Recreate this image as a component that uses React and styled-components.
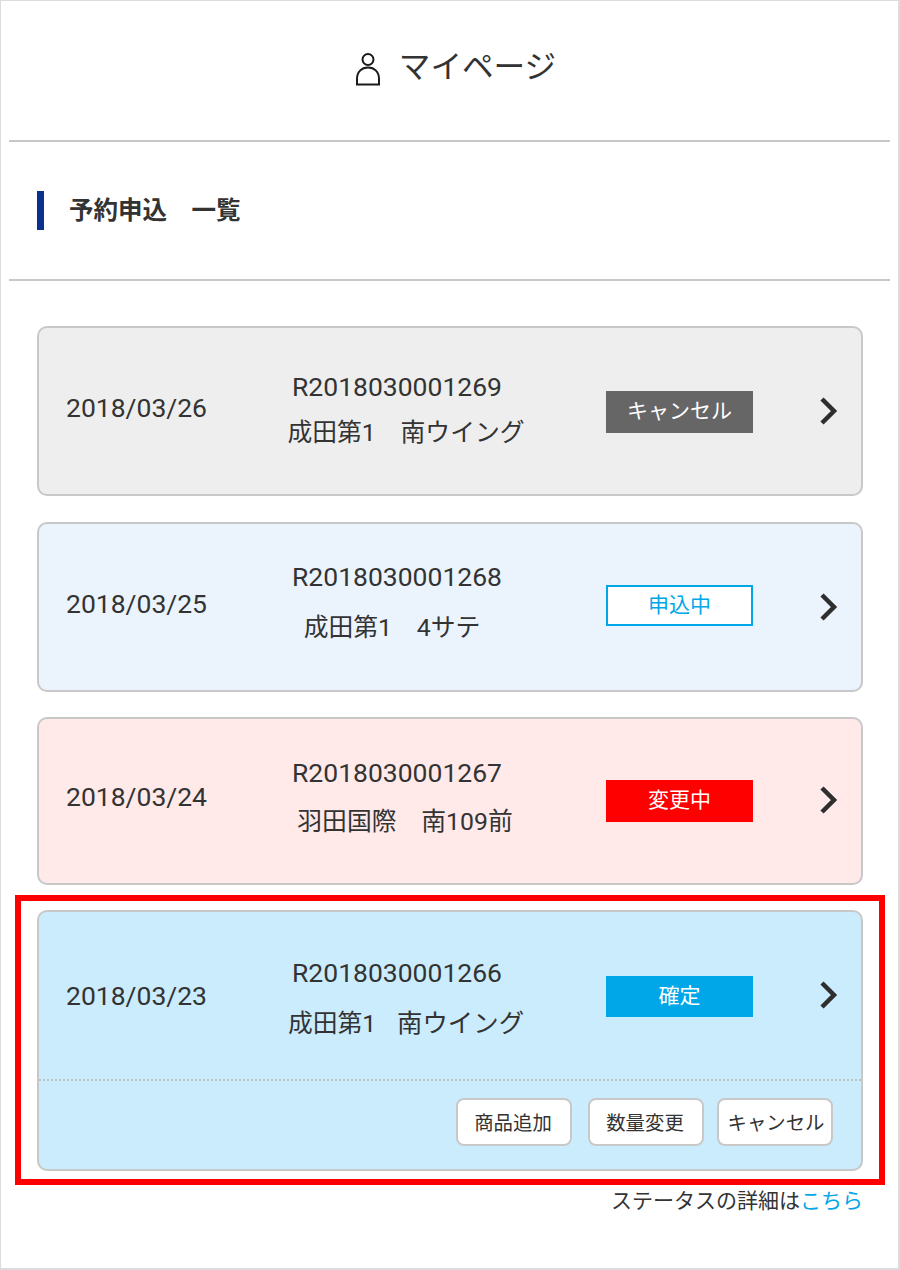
import React from "react";
import styled, { createGlobalStyle } from "styled-components";

const Global = createGlobalStyle`
  html, body { margin: 0; padding: 0; background: #fff; }
  body { font-family: Roboto, "Noto Sans CJK JP", sans-serif; color: #333; }
  * { box-sizing: border-box; }
`;

const Page = styled.div`
  width: 900px;
  height: 1270px;
  border: 1px solid #dcdcdc;
  border-width: 1px 2px 2px 1px;
  background: #fff;
  overflow: hidden;
`;

const Header = styled.header`
  height: 141px;
  margin: 0 8px;
  border-bottom: 2px solid #c8c8c8;
  display: flex;
  align-items: flex-start;
  justify-content: center;
  gap: 18px;
  padding: 45px 0 0 12px;
`;

const Title = styled.h1`
  margin: 1px 0 0;
  font-weight: 400;
  font-size: 31.6px;
  line-height: 42px;
  color: #333;
`;

const Section = styled.div`
  height: 139px;
  margin: 0 8px;
  border-bottom: 2px solid #c8c8c8;
  display: flex;
  align-items: center;
  padding: 0 0 0 28px;
`;

const SectionTitle = styled.h2`
  margin: 0;
  height: 39px;
  border-left: 7px solid #0a3190;
  padding-left: 25px;
  font-size: 24.5px;
  line-height: 40px;
  font-weight: 700;
  color: #333;
  white-space: pre;
`;

const List = styled.main`
  padding: 45px 35px 0 36px;
  display: flex;
  flex-direction: column;
`;

const Card = styled.section`
  height: ${(p) => p.$h}px;
  margin-bottom: ${(p) => p.$mb}px;
  border: 2px solid #c8c8c8;
  border-radius: 10px;
  background: ${(p) => p.$bg};
`;

const Row = styled.div`
  height: 167px;
  display: grid;
  grid-template-columns: 188px 340px 1fr;
`;

const DateCell = styled.div`
  padding: ${(p) => p.$top}px 0 0 27px;
  font-size: 26.5px;
  line-height: 30px;
  color: #333;
`;

const Center = styled.div`
  padding-top: ${(p) => p.$top}px;
  display: flex;
  flex-direction: column;
  align-items: center;
  font-size: 26.5px;
  line-height: 30px;
  color: #333;
`;

const Place = styled.div`
  margin-top: ${(p) => p.$gap}px;
  font-size: 24.8px;
  white-space: pre;
  transform: translateX(${(p) => p.$dx}px);
`;

const WideWord = styled.span`
  font-size: 25.4px;
  margin-left: -4px;
`;

const Right = styled.div`
  padding-top: ${(p) => p.$top}px;
  display: flex;
  align-items: flex-start;
`;

const Badge = styled.div`
  width: 147px;
  height: ${(p) => p.$h}px;
  margin-left: 39px;
  padding-bottom: 6px;
  display: flex;
  align-items: center;
  justify-content: center;
  font-size: 21px;
  color: ${(p) => p.$fg};
  background: ${(p) => p.$bg};
  border: ${(p) => (p.$outline ? `2px solid ${p.$fg}` : "none")};
`;

const Chevron = styled.svg`
  width: 20px;
  height: 28px;
  margin: ${(p) => p.$top}px 0 0 66px;
  flex: none;
`;

const Actions = styled.div`
  border-top: 2px dotted #c0c0c0;
  height: 90px;
  display: flex;
  justify-content: flex-end;
  gap: 13px;
  padding: 17px 28px 0 0;
`;

const ActionButton = styled.button`
  width: 116px;
  height: 48px;
  padding: 0 2px 2px 0;
  border: 2px solid #c8c8c8;
  border-radius: 8px;
  background: #fff;
  font-family: inherit;
  font-size: 19.4px;
  color: #333;
  &:first-child { margin-right: 3px; }
  &:last-child { padding: 0 0 2px 2px; }
`;

const Highlight = styled.div`
  margin: 0 -22px 0 -22px;
  padding: 9px 16px 8px 16px;
  border: 6px solid #ff0000;
  height: 290px;
`;

const Note = styled.p`
  margin: 1px 0 0 0;
  text-align: right;
  font-size: 21px;
  line-height: 30px;
  color: #333;
`;

const NoteLink = styled.a`
  color: #00a7e8;
  text-decoration: none;
`;

const UserSvg = styled.svg`
  margin-top: 6px;
  flex: none;
`;

const UserIcon = () => (
  <UserSvg width="26" height="34" viewBox="0 0 26 34" fill="none" stroke="#1a1a1a" strokeWidth="2">
    <circle cx="13" cy="7.5" r="5.5" />
    <path d="M2 32.5V27C2 20 6.5 15.5 13 15.5S24 20 24 27v5.5Z" />
  </UserSvg>
);

const Arrow = ({ top }) => (
  <Chevron viewBox="0 0 20 28" $top={top}>
    <path d="M3 2 15 14 3 26" fill="none" stroke="#2e2e2e" strokeWidth="4.5" />
  </Chevron>
);

function Entry({ date, id, place, status, fg, badgeBg, outline, bg, h, mb, dateTop, idTop, gap, badgeTop, badgeH, arrowTop, dx, children }) {
  return (
    <Card $bg={bg} $h={h} $mb={mb}>
      <Row>
        <DateCell $top={dateTop}>{date}</DateCell>
        <Center $top={idTop}>
          <div>{id}</div>
          <Place $gap={gap} $dx={dx}>{place}</Place>
        </Center>
        <Right $top={badgeTop}>
          <Badge $fg={fg} $bg={badgeBg} $outline={outline} $h={badgeH}>{status}</Badge>
          <Arrow top={arrowTop} />
        </Right>
      </Row>
      {children}
    </Card>
  );
}

export default function App() {
  return (
    <>
      <Global />
      <Page>
        <Header>
          <UserIcon />
          <Title>マイページ</Title>
        </Header>
        <Section>
          <SectionTitle>予約申込　一覧</SectionTitle>
        </Section>
        <List>
          <Entry date="2018/03/26" id="R2018030001269" place="成田第1　南ウイング" status="キャンセル" fg="#fff" badgeBg="#666" bg="#eee" h={170} mb={26} dateTop={65} idTop={44} gap={16} badgeTop={63} badgeH={42} arrowTop={6} dx={9} />
          <Entry date="2018/03/25" id="R2018030001268" place="成田第1　4サテ" status="申込中" fg="#00a7e8" badgeBg="#fff" outline bg="#ebf3fd" h={170} mb={25} dateTop={65} idTop={38} gap={21} badgeTop={61} badgeH={41} arrowTop={8} dx={-5} />
          <Entry date="2018/03/24" id="R2018030001267" place="羽田国際　南109前" status="変更中" fg="#fff" badgeBg="#ff0000" bg="#ffe9e9" h={168} mb={10} dateTop={63} idTop={39} gap={19} badgeTop={61} badgeH={42} arrowTop={6} dx={8} />
          <Highlight>
            <Entry date="2018/03/23" id="R2018030001266" place={<>成田第1　<WideWord>南ウイング</WideWord></>} status="確定" fg="#fff" badgeBg="#00a7e8" bg="#cbecfd" h={261} mb={0} dateTop={69} idTop={46} gap={20} badgeTop={64} badgeH={41} arrowTop={5} dx={9}>
              <Actions>
                <ActionButton>商品追加</ActionButton>
                <ActionButton>数量変更</ActionButton>
                <ActionButton>キャンセル</ActionButton>
              </Actions>
            </Entry>
          </Highlight>
          <Note>ステータスの詳細は<NoteLink href="#">こちら</NoteLink></Note>
        </List>
      </Page>
    </>
  );
}
